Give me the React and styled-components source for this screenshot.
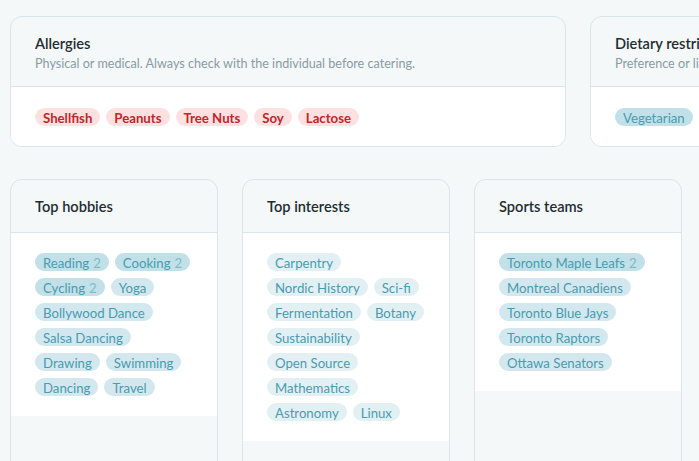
import React from 'react';
import styled, { createGlobalStyle } from 'styled-components';

const GlobalStyle = createGlobalStyle`
  html, body {
    margin: 0;
    padding: 0;
    background: #f4f8f9;
    font-family: 'Lato', 'Noto Sans', sans-serif;
    overflow: hidden;
  }
`;

const topCards = [
  {
    title: 'Allergies',
    subtitle: 'Physical or medical. Always check with the individual before catering.',
    tone: 'red',
    tags: [{ name: 'Shellfish' }, { name: 'Peanuts' }, { name: 'Tree Nuts' }, { name: 'Soy' }, { name: 'Lactose' }],
  },
  {
    title: 'Dietary restrictions',
    subtitle: 'Preference or lifestyle choices.',
    tone: 'blue',
    tags: [{ name: 'Vegetarian', level: 3 }, { name: 'Vegan', level: 2 }, { name: 'Halal', level: 2 }],
  },
];

const bottomCards = [
  {
    title: 'Top hobbies',
    tags: [
      { name: 'Reading', count: 2, level: 3 },
      { name: 'Cooking', count: 2, level: 3 },
      { name: 'Cycling', count: 2, level: 3 },
      { name: 'Yoga', level: 2 },
      { name: 'Bollywood Dance', level: 2 },
      { name: 'Salsa Dancing', level: 2 },
      { name: 'Drawing', level: 2 },
      { name: 'Swimming', level: 2 },
      { name: 'Dancing', level: 2 },
      { name: 'Travel', level: 2 },
    ],
  },
  {
    title: 'Top interests',
    tags: [
      'Carpentry', 'Nordic History', 'Sci-fi', 'Fermentation', 'Botany',
      'Sustainability', 'Open Source', 'Mathematics', 'Astronomy', 'Linux',
    ].map((name) => ({ name, level: 1 })),
  },
  {
    title: 'Sports teams',
    tags: [
      { name: 'Toronto Maple Leafs', count: 2, level: 3 },
      { name: 'Montreal Canadiens', level: 2 },
      { name: 'Toronto Blue Jays', level: 2 },
      { name: 'Toronto Raptors', level: 2 },
      { name: 'Ottawa Senators', level: 2 },
    ],
  },
];

const App = () => (
  <>
    <GlobalStyle />
    <Page>
      <TopRow>
        {topCards.map((card) => (
          <Card key={card.title} $wide>
            <CardHeader $tall>
              <Title>{card.title}</Title>
              <Subtitle>{card.subtitle}</Subtitle>
            </CardHeader>
            <CardBody $top={21}>
              <TagList>
                {card.tags.map((tag) => (
                  <Tag key={tag.name} $tone={card.tone} $level={tag.level}>
                    {tag.name}
                  </Tag>
                ))}
              </TagList>
            </CardBody>
          </Card>
        ))}
      </TopRow>

      <BottomRow>
        {bottomCards.map((card) => (
          <Card key={card.title} $tall>
            <CardHeader>
              <Title>{card.title}</Title>
            </CardHeader>
            <CardBody $top={20}>
              <TagList>
                {card.tags.map((tag) => (
                  <Tag key={tag.name} $tone='blue' $level={tag.level}>
                    {tag.name}
                    {tag.count && <Count>{tag.count}</Count>}
                  </Tag>
                ))}
              </TagList>
            </CardBody>
          </Card>
        ))}
      </BottomRow>
    </Page>
  </>
);

export default App;

const Page = styled.main`
  padding: 16px 0 0 10px;
  display: flex;
  flex-direction: column;
  gap: 32px;
`;

const TopRow = styled.section`
  display: flex;
  gap: 24px;
  width: max-content;
`;

const BottomRow = styled.section`
  display: grid;
  grid-template-columns: repeat(3, 208px);
  gap: 24px;
`;

const Card = styled.article`
  box-sizing: border-box;
  width: ${({ $wide }) => ($wide ? '556px' : 'auto')};
  min-height: ${({ $tall }) => ($tall ? '320px' : '0')};
  background: #f4f8f9;
  border: 1px solid #d9e6ea;
  border-radius: 12px;
  overflow: hidden;
  display: flex;
  flex-direction: column;
`;

const CardHeader = styled.header`
  box-sizing: border-box;
  height: ${({ $tall }) => ($tall ? '70px' : '53px')};
  padding: 2px 24px 0;
  display: flex;
  flex-direction: column;
  justify-content: center;
  gap: 3px;
  border-bottom: 1px solid #d9e6ea;
`;

const Title = styled.h2`
  margin: 0;
  font-size: 14.6px;
  font-weight: 600;
  color: #1f2d33;
  line-height: 18px;
`;

const Subtitle = styled.p`
  margin: 0;
  font-size: 12.6px;
  color: #8a9ba3;
  line-height: 15px;
  white-space: nowrap;
`;

const CardBody = styled.div`
  background: #fff;
  padding: ${({ $top }) => `${$top}px 24px 20px`};
`;

const TagList = styled.div`
  display: flex;
  flex-wrap: wrap;
  gap: 7px 6px;
`;

const blueLevels = {
  1: '#e2f0f4',
  2: '#d3e8ee',
  3: '#c1e0e8',
};

const Tag = styled.span`
  box-sizing: border-box;
  display: inline-flex;
  align-items: center;
  height: 18px;
  padding: 1px 8px 0;
  border-radius: 9px;
  font-size: 13.2px;
  white-space: nowrap;
  font-weight: ${({ $tone }) => ($tone === 'red' ? 700 : 400)};
  color: ${({ $tone }) => ($tone === 'red' ? '#c0262b' : '#4a9bb0')};
  background: ${({ $tone, $level }) => ($tone === 'red' ? '#fde1e1' : blueLevels[$level || 2])};
`;

const Count = styled.span`
  margin-left: 4px;
  color: #80b9c8;
`;
